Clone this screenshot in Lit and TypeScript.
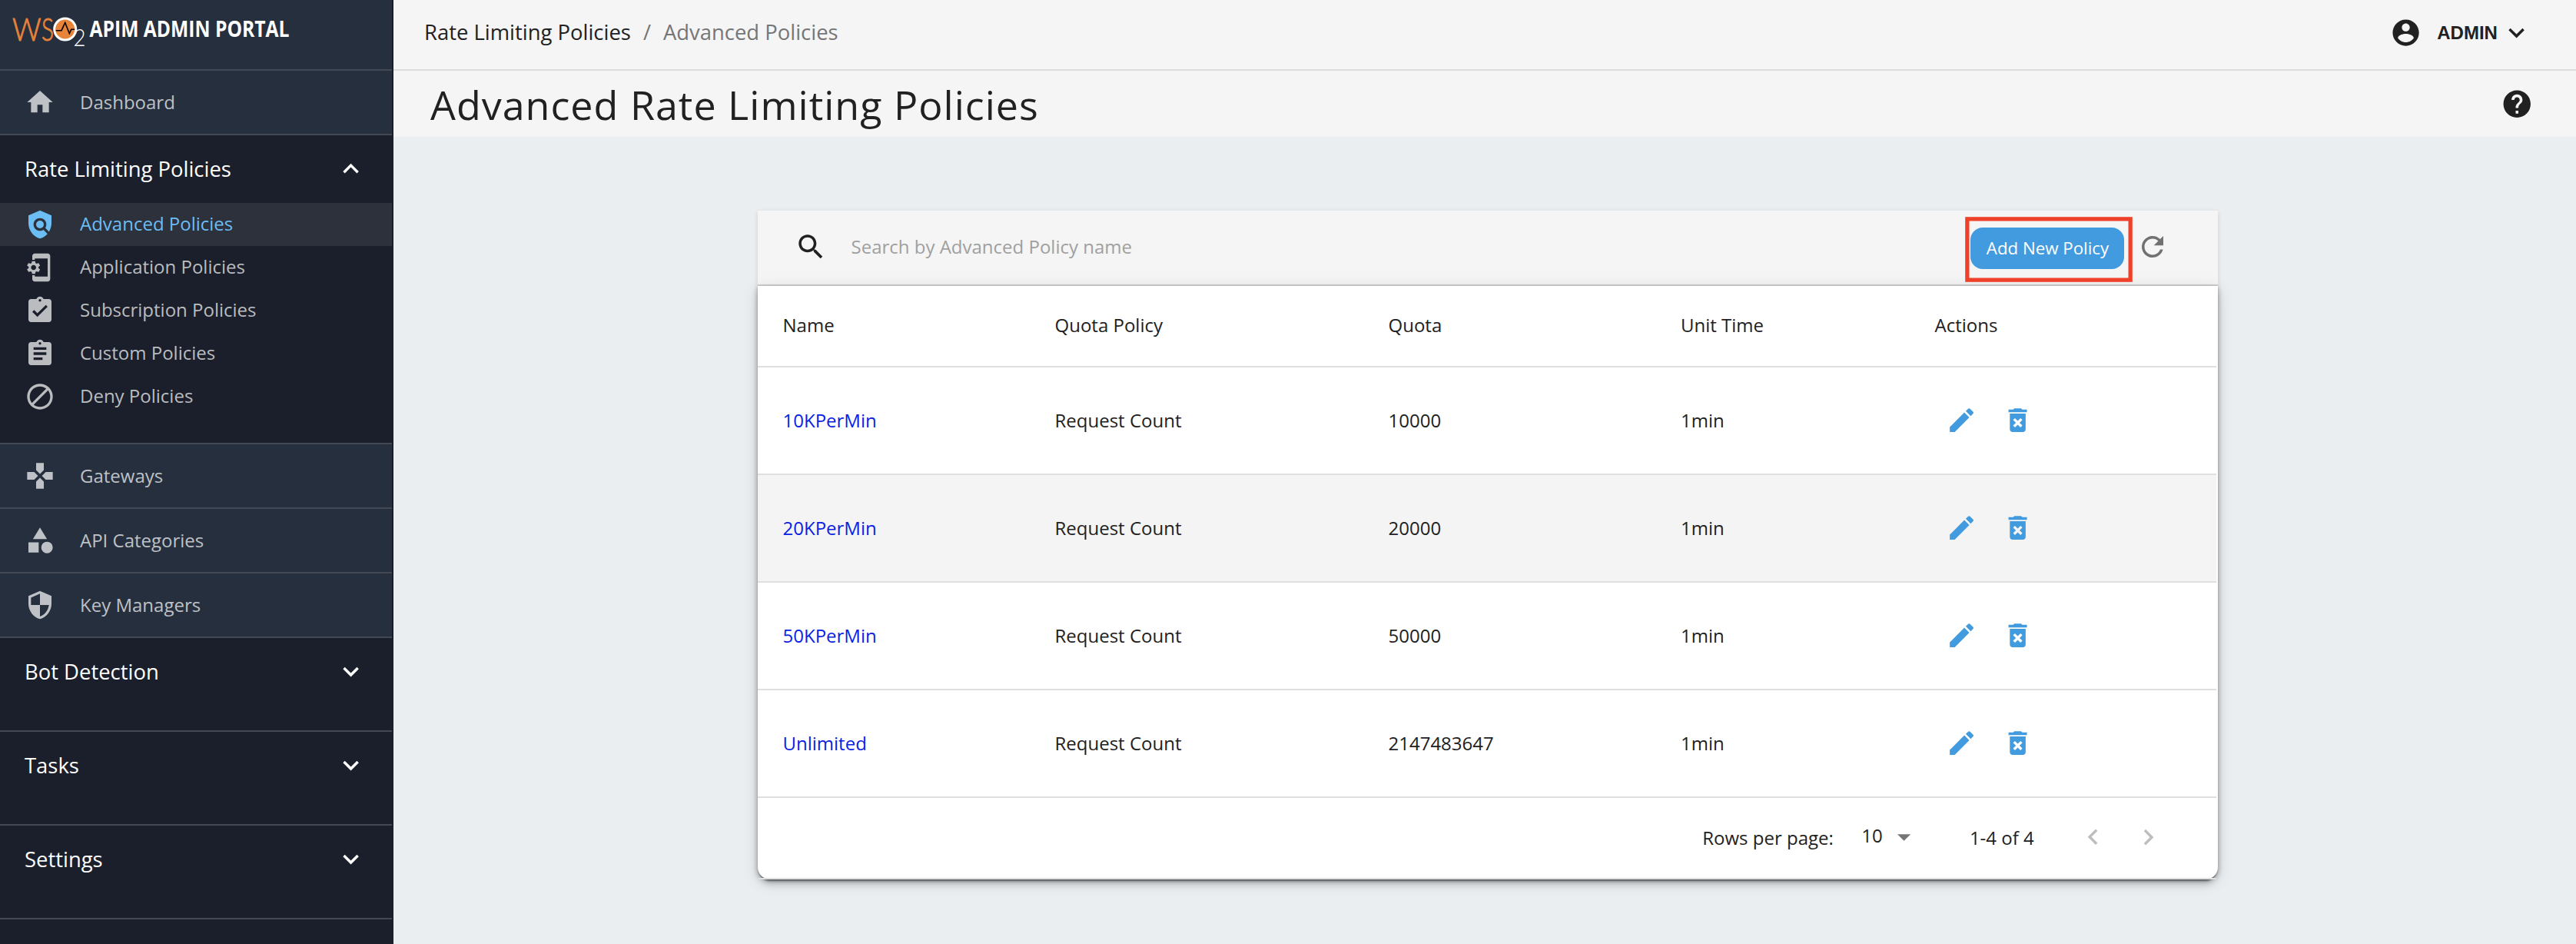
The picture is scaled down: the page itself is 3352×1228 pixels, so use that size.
import { LitElement, html, css, svg, nothing } from "lit";
import { customElement, property } from "lit/decorators.js";

const ICONS: Record<string, string> = {
  home: "M10 20v-6h4v6h5v-8h3L12 3 2 12h3v8z",
  policy:
    "M21 5l-9-4-9 4v6c0 5.55 3.84 10.74 9 12 2.3-.56 4.33-1.9 5.88-3.71l-3.12-3.12c-1.94 1.29-4.58 1.07-6.29-.64-1.95-1.95-1.95-5.12 0-7.07 1.95-1.95 5.12-1.95 7.07 0 1.71 1.71 1.92 4.35.64 6.29l2.9 2.9C20.29 15.69 21 13.38 21 11V5z M12 9a3 3 0 1 0 0 6a3 3 0 1 0 0-6z",
  appSettings:
    "M10.8 12.5v-1l1.1-.8c.1-.1.1-.2.1-.3l-1-1.7c-.1-.1-.2-.2-.3-.1l-1.3.4c-.3-.2-.6-.4-.9-.5l-.2-1.300c0-.1-.1-.2-.3-.2H6c-.1 0-.2.1-.3.2l-.2 1.300c-.3.1-.6.3-.9.5l-1.300-.5c-.1 0-.2 0-.3.1l-1 1.700c-.1.1 0 .2.1.3l1.100.8v1l-1.100.8c-.1.2-.1.3-.1.4l1 1.700c.1.1.2.2.3.1l1.400-.4c.3.2.6.4.9.5l.2 1.300c-.1.1.1.2.2.2h2c.1 0 .2-.1.3-.2l.2-1.300c.3-.1.6-.3.9-.5l1.300.5c.1 0 .2 0 .3-.1l1-1.700c.1-.1 0-.2-.1-.3l-1.100-.9zM7 14c-1.100 0-2-.9-2-2s.9-2 2-2 2 .9 2 2-.9 2-2 2zM18 1H8c-1.100 0-2 .9-2 2v3h2V5h10v14H8v-1H6v3c0 1.100.9 2 2 2h10c1.100 0 2-.9 2-2V3c0-1.100-.9-2-2-2z",
  assignmentDone:
    "M19 3h-4.180C14.400 1.840 13.300 1 12 1c-1.300 0-2.400.840-2.820 2H5c-1.100 0-2 .9-2 2v14c0 1.100.9 2 2 2h14c1.100 0 2-.9 2-2V5c0-1.100-.9-2-2-2zm-7 0c.55 0 1 .45 1 1s-.45 1-1 1-1-.45-1-1 .45-1 1-1zm-2 14l-4-4 1.410-1.410L10 14.170l6.590-6.590L18 9l-8 8z",
  assignment:
    "M19 3h-4.180C14.400 1.840 13.300 1 12 1c-1.300 0-2.400.840-2.820 2H5c-1.100 0-2 .9-2 2v14c0 1.100.9 2 2 2h14c1.100 0 2-.9 2-2V5c0-1.100-.9-2-2-2zm-7 0c.55 0 1 .45 1 1s-.45 1-1 1-1-.45-1-1 .45-1 1-1zm2 14H7v-2h7v2zm3-4H7v-2h10v2zm0-4H7V7h10v2z",
  block:
    "M12 2C6.480 2 2 6.480 2 12s4.480 10 10 10 10-4.480 10-10S17.520 2 12 2zm0 18c-4.420 0-8-3.580-8-8 0-1.850.630-3.550 1.690-4.900L16.900 18.310C15.550 19.370 13.850 20 12 20zm6.310-3.100L7.100 5.690C8.450 4.630 10.150 4 12 4c4.420 0 8 3.580 8 8 0 1.850-.630 3.550-1.690 4.900z",
  gamepad:
    "M15 7.500V2H9v5.500l3 3 3-3zM7.500 9H2v6h5.500l3-3-3-3zM9 16.500V22h6v-5.500l-3-3-3 3zM16.500 9l-3 3 3 3H22V9h-5.500z",
  category:
    "M12 2l-5.500 9h11z M17.500 13a4.500 4.500 0 1 0 0 9a4.500 4.500 0 1 0 0-9z M3 13.500h8v8H3z",
  shield:
    "M12 1L3 5v6c0 5.550 3.840 10.740 9 12 5.160-1.260 9-6.450 9-12V5l-9-4zm0 10.990h7c-.530 4.120-3.280 7.790-7 8.940V12H5V6.300l7-3.110v8.800z",
  more: "M16.590 8.590L12 13.170 7.410 8.590 6 10l6 6 6-6z",
  less: "M12 8l-6 6 1.410 1.410L12 10.830l4.590 4.580L18 14z",
  account:
    "M12 2C6.480 2 2 6.480 2 12s4.480 10 10 10 10-4.480 10-10S17.520 2 12 2zm0 3c1.660 0 3 1.340 3 3s-1.340 3-3 3-3-1.340-3-3 1.340-3 3-3zm0 14.200c-2.500 0-4.710-1.280-6-3.220.030-1.990 4-3.080 6-3.080 1.990 0 5.970 1.090 6 3.080-1.290 1.940-3.500 3.220-6 3.220z",
  help: "M12 2C6.480 2 2 6.480 2 12s4.480 10 10 10 10-4.480 10-10S17.520 2 12 2zm1 17h-2v-2h2v2zm2.070-7.750l-.9.920C13.450 12.900 13 13.500 13 15h-2v-.5c0-1.100.45-2.100 1.170-2.830l1.240-1.260c.370-.360.590-.860.590-1.410 0-1.100-.9-2-2-2s-2 .9-2 2H8c0-2.210 1.790-4 4-4s4 1.790 4 4c0 .880-.360 1.680-.930 2.250z",
  search:
    "M15.500 14h-.790l-.280-.270C15.410 12.590 16 11.110 16 9.500 16 5.910 13.090 3 9.500 3S3 5.910 3 9.500 5.910 16 9.500 16c1.610 0 3.090-.590 4.230-1.570l.270.280v.790l5 4.990L20.490 19l-4.990-5zm-6 0C7.010 14 5 11.990 5 9.500S7.010 5 9.500 5 14 7.010 14 9.500 11.990 14 9.500 14z",
  refresh:
    "M17.650 6.350C16.200 4.900 14.210 4 12 4c-4.420 0-7.990 3.580-7.990 8s3.570 8 7.990 8c3.730 0 6.840-2.550 7.730-6h-2.080c-.820 2.330-3.040 4-5.650 4-3.310 0-6-2.690-6-6s2.690-6 6-6c1.660 0 3.140.690 4.220 1.780L13 11h7V4l-2.350 2.350z",
  edit: "M3 17.250V21h3.750L17.810 9.940l-3.750-3.750L3 17.250zM20.710 7.040c.390-.390.390-1.020 0-1.410l-2.340-2.340c-.390-.390-1.020-.390-1.410 0l-1.830 1.830 3.750 3.750 1.830-1.830z",
  trash:
    "M6 19c0 1.100.9 2 2 2h8c1.100 0 2-.9 2-2V7H6v12zm2.460-7.120l1.410-1.410L12 12.590l2.120-2.120 1.410 1.410L13.410 14l2.120 2.120-1.410 1.410L12 15.410l-2.120 2.120-1.410-1.410L10.590 14l-2.130-2.120zM15.500 4l-1-1h-5l-1 1H5v2h14V4z",
  drop: "M7 10l5 5 5-5z",
  left: "M15.410 16.090l-4.580-4.590 4.580-4.590L14 5.500l-6 6 6 6z",
  right: "M8.590 16.340l4.580-4.590-4.580-4.590L10 5.750l6 6-6 6z",
};

@customElement("ui-icon")
class UiIcon extends LitElement {
  @property() name = "";
  static styles = css`
    :host {
      display: block;
      flex: none;
      width: 41.14px;
      height: 41.14px;
    }
    svg {
      display: block;
      width: 100%;
      height: 100%;
      fill: currentColor;
    }
    .flip {
      transform: scaleX(-1);
    }
  `;
  render() {
    return html`<svg class=${this.name === "block" ? "flip" : ""} viewBox="0 0 24 24">
      ${svg`<path d=${ICONS[this.name] ?? ""}></path>`}
    </svg>`;
  }
}

const POLICY_ITEMS = [
  ["policy", "Advanced Policies"],
  ["appSettings", "Application Policies"],
  ["assignmentDone", "Subscription Policies"],
  ["assignment", "Custom Policies"],
  ["block", "Deny Policies"],
];
const LINKS = [
  ["gamepad", "Gateways"],
  ["category", "API Categories"],
  ["shield", "Key Managers"],
];
const SECTIONS = ["Bot Detection", "Tasks", "Settings"];

@customElement("side-nav")
class SideNav extends LitElement {
  static styles = css`
    :host {
      display: flex;
      flex-direction: column;
      box-sizing: border-box;
      width: 512px;
      height: 1228px;
      padding-right: 2px;
      background: #1a1f2b;
      color: #fff;
      overflow: hidden;
    }
    .brand {
      flex: none;
      height: 90px;
      background: #262f3e;
      border-bottom: 2px solid #434855;
    }
    .brand svg {
      display: block;
    }
    .light {
      font-family: Lato, "Open Sans", sans-serif;
      font-weight: 300;
    }
    .name {
      font-family: "Open Sans", sans-serif;
      font-weight: 700;
      font-size: 28px;
    }
    .item {
      flex: none;
      display: flex;
      align-items: center;
      gap: 32px;
      padding-left: 32px;
      font-size: 24px;
      color: #bbbcbf;
    }
    .item ui-icon {
      width: 40px;
      height: 40px;
    }
    .top {
      height: 82px;
      background: #262f3e;
      border-bottom: 2px solid #434855;
      color: #bec1c5;
    }
    .sub {
      height: 56px;
    }
    .sub .label {
      padding-bottom: 1px;
    }
    .active {
      background: #2d313c;
      color: #6bbdf3;
    }
    .section {
      flex: none;
      display: flex;
      align-items: center;
      justify-content: space-between;
      height: 88px;
      padding: 0 32.4px 0 32px;
      font-size: 27.43px;
    }
    .group {
      flex: none;
      padding-bottom: 32px;
      border-bottom: 2px solid #434855;
    }
  `;
  render() {
    return html`
      <div class="brand">
        <svg width="510" height="90" viewBox="0 0 510 90">
          <g class="light">
            <text x="16" y="53" font-size="41" fill="#e8833a" stroke="#e8833a" stroke-width=".9" textLength="37.500" lengthAdjust="spacingAndGlyphs">W</text>
            <text x="54" y="53" font-size="41" fill="#e8833a" stroke="#e8833a" stroke-width=".9" textLength="16" lengthAdjust="spacingAndGlyphs">S</text>
            <text x="95.500" y="60" font-size="31" fill="#fff" textLength="16" lengthAdjust="spacingAndGlyphs">2</text>
          </g>
          <circle cx="84.700" cy="38" r="14" fill="#e8833a" stroke="#fff" stroke-width="3"></circle>
          <path d="M72.700 39.700H80L84.700 29.500L90.300 43.500L92.700 38.300H97.200" fill="none" stroke="#000" stroke-width="1.600"></path>
          <text class="name" x="116.500" y="48.300" fill="#fff" textLength="260" lengthAdjust="spacingAndGlyphs">APIM ADMIN PORTAL</text>
        </svg>
      </div>
      <div class="item top"><ui-icon name="home"></ui-icon><span class="label">Dashboard</span></div>
      <div class="group">
        <div class="section"><span>Rate Limiting Policies</span><ui-icon name="less"></ui-icon></div>
        ${POLICY_ITEMS.map(
          ([icon, label], i) => html`<div class="item sub ${i === 0 ? "active" : ""}">
            <ui-icon name=${icon}></ui-icon><span class="label">${label}</span>
          </div>`
        )}
      </div>
      ${LINKS.map(
        ([icon, label]) => html`<div class="item top">
          <ui-icon name=${icon}></ui-icon><span class="label">${label}</span>
        </div>`
      )}
      ${SECTIONS.map(
        (label) => html`<div class="group">
          <div class="section"><span>${label}</span><ui-icon name="more"></ui-icon></div>
        </div>`
      )}
    `;
  }
}

const ROWS = [
  ["10KPerMin", "Request Count", "10000", "1min"],
  ["20KPerMin", "Request Count", "20000", "1min"],
  ["50KPerMin", "Request Count", "50000", "1min"],
  ["Unlimited", "Request Count", "2147483647", "1min"],
];
const HEADS = ["Name", "Quota Policy", "Quota", "Unit Time", "Actions"];

@customElement("policy-table")
class PolicyTable extends LitElement {
  static styles = css`
    :host {
      display: block;
      width: 1900px;
      border-radius: 0 0 16px 16px;
      box-shadow: 0 4px 2px -2px rgba(0, 0, 0, 0.1), 0 2px 6px rgba(0, 0, 0, 0.12);
      color: #212121;
      font-size: 24px;
    }
    .toolbar {
      display: flex;
      align-items: center;
      box-sizing: border-box;
      height: 98px;
      padding: 0 64px 2px 48px;
      background: #f5f5f5;
      border-bottom: 2px solid #d2d2d2;
    }
    .search {
      width: 42.500px;
      height: 42.500px;
    }
    .placeholder {
      flex: 1;
      padding-left: 31px;
      color: #a0a0a0;
    }
    .cta {
      position: relative;
      margin-top: 3px;
    }
    .button {
      box-sizing: border-box;
      width: 200px;
      height: 54px;
      display: flex;
      align-items: center;
      justify-content: center;
      padding: 2px 0 0 1px;
      border-radius: 16px;
      background: #429adf;
      color: #fff;
      font-size: 22.290px;
    }
    .marker {
      position: absolute;
      left: -7px;
      top: -14px;
      width: 218px;
      height: 85px;
      z-index: 2;
    }
    .refresh {
      width: 42px;
      height: 42px;
      margin-left: 16px;
      margin-right: 0;
      color: #717171;
    }
    .sheet {
      border-radius: 0 0 16px 16px;
      background: #fff;
      box-shadow: 0 4px 2px -2px rgba(0, 0, 0, 0.22), 0 2px 2px rgba(0, 0, 0, 0.16),
        0 2px 6px rgba(0, 0, 0, 0.14), 0 4px 20px rgba(0, 0, 0, 0.14), 0 6px 10px rgba(0, 0, 0, 0.14);
      height: 772px;
      padding-right: 2px;
    }
    .row {
      display: grid;
      grid-template-columns: 354px 434px 380.500px 330.500px 399px;
      align-items: center;
      height: 138px;
      border-bottom: 2px solid #dfdfdf;
    }
    .row > * {
      padding-left: 32.500px;
    }
    .head {
      height: 104px;
    }
    .head > * {
      padding-bottom: 1px;
    }
    .striped {
      background: #f4f4f4;
    }
    .link {
      color: #0a22e4;
    }
    .row > .actions {
      display: flex;
      gap: 32px;
      padding-left: 47px;
      color: #429adf;
    }
    .pager {
      display: flex;
      align-items: center;
      height: 104px;
      border-bottom: 2px solid #dfdfdf;
      justify-content: flex-end;
      padding-right: 68px;
    }
    .pager ui-icon {
      color: #bdbdbd;
    }
    .pager > span {
      padding-top: 1px;
    }
    .size {
      display: flex;
      align-items: center;
      margin: -7px 65px 0 36.500px;
    }
    .size .drop {
      color: #757575;
      margin-left: 7px;
      margin-top: 3px;
    }
    .range {
      margin-right: 56px;
    }
    .next {
      margin-left: 31px;
    }
  `;
  render() {
    return html`
      <div class="toolbar">
        <ui-icon class="search" name="search"></ui-icon>
        <span class="placeholder">Search by Advanced Policy name</span>
        <div class="cta">
          <div class="button">Add New Policy</div>
          <svg class="marker" viewBox="0 0 218 85">
            <rect x="2.850" y="2.850" width="212.300" height="79.300" fill="none" stroke="#ef4129" stroke-width="5.300"></rect>
          </svg>
        </div>
        <ui-icon class="refresh" name="refresh"></ui-icon>
      </div>
      <div class="sheet">
        <div class="row head">${HEADS.map((h) => html`<span>${h}</span>`)}</div>
        ${ROWS.map(
          (r, i) => html`<div class="row ${i === 1 ? "striped" : ""}">
            ${r.map((c, j) => html`<span class=${j === 0 ? "link" : nothing}>${c}</span>`)}
            <span class="actions"><ui-icon name="edit"></ui-icon><ui-icon name="trash"></ui-icon></span>
          </div>`
        )}
        <div class="pager">
          <span>Rows per page:</span>
          <span class="size"><span>10</span><ui-icon class="drop" name="drop"></ui-icon></span>
          <span class="range">1-4 of 4</span>
          <ui-icon name="left"></ui-icon>
          <ui-icon class="next" name="right"></ui-icon>
        </div>
      </div>
    `;
  }
}

@customElement("app-root")
class AppRoot extends LitElement {
  static styles = css`
    :host {
      display: flex;
      width: 3352px;
      height: 1228px;
      overflow: hidden;
      font-family: "Open Sans", sans-serif;
      line-height: 1.360;
      background: #eaeef1;
      color: #212121;
    }
    side-nav {
      flex: none;
    }
    .main {
      flex: 1;
      display: flex;
      flex-direction: column;
    }
    .topbar {
      display: flex;
      align-items: center;
      justify-content: space-between;
      box-sizing: border-box;
      height: 92px;
      padding: 0 57px 7px 40px;
      background: #f5f5f5;
      border-bottom: 2px solid #dcdcdc;
      font-size: 27.430px;
    }
    .crumbs {
      display: flex;
      gap: 16px;
    }
    .muted {
      color: #767676;
    }
    .user {
      display: flex;
      align-items: center;
      padding-top: 2px;
    }
    .admin {
      font: 700 24px "Liberation Sans", Arial, sans-serif;
      margin: 0 4px 0 20px;
    }
    .titlebar {
      display: flex;
      align-items: center;
      justify-content: space-between;
      box-sizing: border-box;
      height: 86px;
      padding: 0 56px 0 48px;
      background: #f5f5f5;
    }
    .title {
      margin: 0;
      font-size: 52px;
      font-weight: 400;
      letter-spacing: 1px;
      line-height: 1;
      padding-top: 1px;
    }
    .help {
      width: 42.500px;
      height: 42.500px;
    }
    .content {
      display: flex;
      justify-content: center;
      padding: 96px 0 0 8px;
    }
  `;
  render() {
    return html`
      <side-nav></side-nav>
      <div class="main">
        <div class="topbar">
          <div class="crumbs"><span>Rate Limiting Policies</span><span class="muted">/</span><span class="muted">Advanced Policies</span></div>
          <div class="user">
            <ui-icon name="account"></ui-icon><span class="admin">ADMIN</span><ui-icon name="more"></ui-icon>
          </div>
        </div>
        <div class="titlebar">
          <h1 class="title">Advanced Rate Limiting Policies</h1>
          <ui-icon class="help" name="help"></ui-icon>
        </div>
        <div class="content"><policy-table></policy-table></div>
      </div>
    `;
  }
}
